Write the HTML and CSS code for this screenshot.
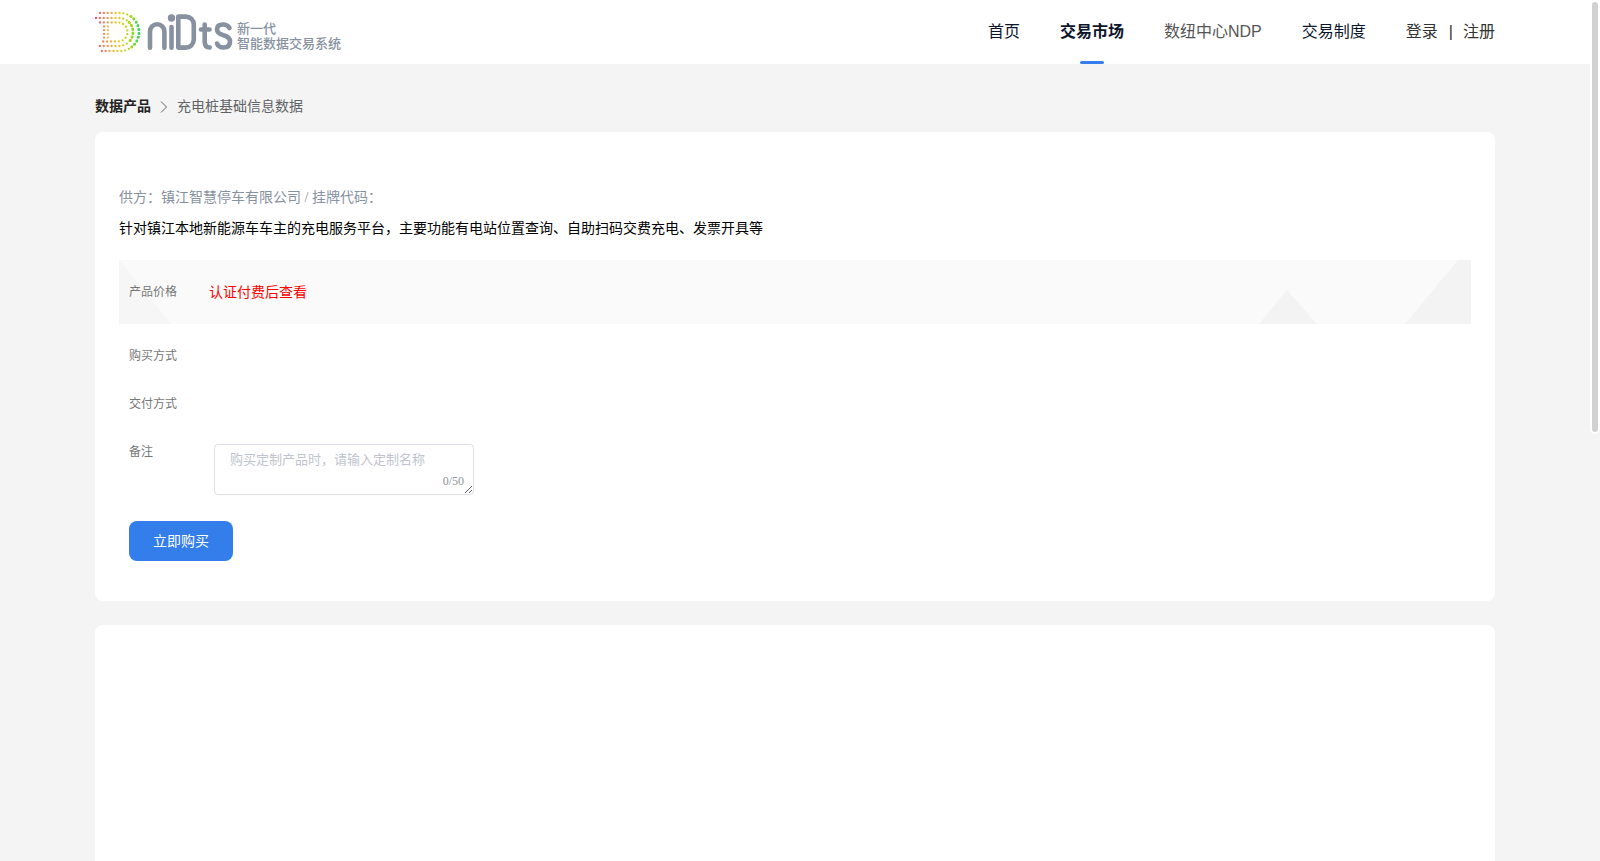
FILE: index.html
```html
<!DOCTYPE html>
<html lang="zh-CN">
<head>
  <meta charset="UTF-8" />
  <meta name="viewport" content="width=device-width, initial-scale=1.0"/>
  <title>充电桩基础信息数据</title>
  <link rel="stylesheet" href="styles.css">
</head>
<body>
  <header class="header">
    <div class="container header-inner">
      <a href="#" class="logo">
        <svg class="logo-mark" viewBox="0 0 150 42" width="150" height="42" aria-hidden="true">
          <defs>
            <linearGradient id="dots" gradientUnits="userSpaceOnUse" x1="0" y1="0" x2="46" y2="0">
              <stop offset="0" stop-color="#f8406f"/>
              <stop offset="0.25" stop-color="#fb9050"/>
              <stop offset="0.5" stop-color="#e6cf16"/>
              <stop offset="0.78" stop-color="#a8d81c"/>
              <stop offset="1" stop-color="#20d874"/>
            </linearGradient>
          </defs>
          <g fill="none" stroke="url(#dots)" stroke-width="2.3" stroke-linecap="round">
            <path stroke-dasharray="0 3.9" d="M5 2h20a19 19 0 0 1 0 38H5"/>
            <path stroke-dasharray="0 3.9" d="M1 7h23a14 14 0 0 1 0 28H1"/>
            <path stroke-dasharray="0 3.9" d="M5 11.500h18a9.500 9.500 0 0 1 0 19H5"/>
          </g>
          <g fill="none" stroke="#fb9050" stroke-width="2.3" stroke-linecap="round" stroke-dasharray="0 3.7">
            <path d="M9 15.500v12"/>
            <path d="M13 15.500v12" stroke="#f9bd55"/>
          </g>
          <!-- dots get larger towards the right side of the arc -->
          <g fill="none" stroke="url(#dots)" stroke-width="3" stroke-linecap="round" stroke-dasharray="0 3.9">
            <path d="M36 5.500a19 19 0 0 1 0 31"/>
            <path d="M34 11.200a14 14 0 0 1 0 19.600"/>
          </g>
          <g fill="none" stroke="#87919f" stroke-width="4.600" stroke-linecap="round" stroke-linejoin="round">
            <path d="M55 36.700V20.500a7.200 7.200 0 0 1 14.400 0v16.200"/>
            <path d="M76.500 36.700V16"/>
            <path d="M83.300 5.600h7.500a8 8 0 0 1 8 8v15a8 8 0 0 1-8 8h-7.500z"/>
            <path d="M109.700 13.500v17q0 6 5 6M106 18.500h8.500"/>
            <path d="M134.500 17q-2-3.500-6.500-3.500-6 0-6 5 0 4 6.500 5.700t6.500 6.300q0 6-6.500 6-5 0-6.500-4"/>
          </g>
          <circle cx="76.500" cy="7" r="3.700" fill="#87919f"/>
        </svg>
        <span class="logo-text">新一代<br>智能数据交易系统</span>
      </a>
      <nav class="nav">
        <a href="#">首页</a>
        <a href="#" class="active">交易市场</a>
        <a href="#" class="ndp">数纽中心NDP</a>
        <a href="#">交易制度</a>
        <div class="account">
          <a href="#">登录</a>
          <span>|</span>
          <a href="#">注册</a>
        </div>
      </nav>
    </div>
  </header>

  <main class="container main">
    <div class="breadcrumb">
      <a href="#">数据产品</a>
      <svg viewBox="0 0 14 14" width="14" height="14" aria-hidden="true">
        <path d="M4 1.500l5.500 5.500L4 12.500" fill="none" stroke="#606266" stroke-width="1"/>
      </svg>
      <span>充电桩基础信息数据</span>
    </div>

    <section class="card product">
      <p class="supplier">供方：镇江智慧停车有限公司 / 挂牌代码：</p>
      <p class="desc">针对镇江本地新能源车车主的充电服务平台，主要功能有电站位置查询、自助扫码交费充电、发票开具等</p>

      <div class="price">
        <svg class="price-left" viewBox="0 0 52 64" width="52" height="64" aria-hidden="true">
          <path d="M0 0L52 64H0z" fill="#f6f6f6"/>
        </svg>
        <svg class="price-right" viewBox="0 0 212 64" width="212" height="64" aria-hidden="true">
          <path d="M0 64L28 30L58 64zM146 64L199 0H212V64z" fill="#f3f3f3"/>
        </svg>
        <span class="label">产品价格</span>
        <span class="price-value">认证付费后查看</span>
      </div>

      <div class="row"><span class="label">购买方式</span></div>
      <div class="row"><span class="label">交付方式</span></div>
      <div class="row">
        <label class="label" for="remark">备注</label>
        <div class="textarea-box">
          <textarea id="remark" maxlength="50" placeholder="购买定制产品时，请输入定制名称"></textarea>
          <span class="count">0/50</span>
        </div>
      </div>
      <button class="buy" type="button">立即购买</button>
    </section>

    <section class="card detail"></section>
  </main>

  <div class="scroll-thumb"></div>
</body>
</html>
```

FILE: styles.css
```css
* {
  box-sizing: border-box;
}
body {
  margin: 0;
  padding-right: 10px;
  height: 100vh;
  display: flex;
  flex-direction: column;
  overflow: hidden;
  background-color: #f4f4f4;
  font-family: "Liberation Serif", "Noto Sans CJK SC", serif;
  font-size: 14px;
  color: #000;
}
a {
  color: inherit;
  text-decoration: none;
}
p {
  margin: 0;
}
.container {
  width: 100%;
  max-width: 1400px;
  margin: 0 auto;
}

/* header */
.header {
  background-color: #fff;
  margin-right: -10px;
  padding-right: 10px;
}
.header-inner {
  display: flex;
  justify-content: space-between;
  height: 64px;
  font-family: "Liberation Sans", "Noto Sans CJK SC", sans-serif;
}
.logo {
  display: flex;
  align-items: center;
  color: #87919f;
}
.logo-mark {
  margin-right: -8px;
}
.logo-text {
  font-size: 13px;
  line-height: 15px;
  font-weight: 500;
  padding-top: 8px;
}
.nav {
  display: flex;
  gap: 40px;
  font-size: 16px;
  line-height: 64px;
  color: #0b162b;
}
.nav .active {
  position: relative;
  font-weight: bold;
}
.nav .active::after {
  content: "";
  position: absolute;
  left: calc(50% - 12px);
  bottom: 0;
  width: 24px;
  height: 3px;
  border-radius: 2px;
  background-color: #347eeb;
}
.nav .ndp {
  color: #555;
}
.account {
  display: flex;
  gap: 10px;
  color: #333;
}
.account span {
  padding-left: 1px;
}

/* breadcrumb */
.main {
  flex: 1;
  display: flex;
  flex-direction: column;
}
.breadcrumb {
  display: flex;
  align-items: center;
  gap: 6px;
  padding: 32px 0 15px;
  line-height: 21px;
  color: #606266;
}
.breadcrumb a {
  font-weight: bold;
  color: #222;
}

/* product card */
.card {
  background-color: #fff;
  border-radius: 8px;
}
.product {
  padding: 56px 24px 40px;
}
.supplier {
  line-height: 20px;
  color: #87919f;
}
.desc {
  margin: 11px 0 21px;
  line-height: 20px;
}
.price {
  position: relative;
  display: flex;
  align-items: center;
  height: 64px;
  margin-bottom: 20px;
  padding: 0 10px 3px;
  background-color: #fafafa;
}
.price svg {
  position: absolute;
  bottom: 0;
}
.price-left {
  left: 0;
}
.price-right {
  right: 0;
}
.label {
  position: relative;
  width: 80px;
  font-size: 12px;
  color: #777;
}
.price-value {
  color: #f00;
}
.row {
  display: flex;
  margin-bottom: 24px;
  padding-left: 10px;
  line-height: 24px;
}
.textarea-box {
  position: relative;
  width: 260px;
  margin: 4px 0 0 5px;
}
.textarea-box textarea {
  display: block;
  width: 100%;
  height: 51px;
  padding: 5px 15px;
  border: 1px solid #dcdfe6;
  border-radius: 4px;
  font-family: inherit;
  font-size: 13px;
  line-height: 20px;
  resize: vertical;
}
.textarea-box textarea::placeholder {
  color: #c0c4cc;
}
.count {
  position: absolute;
  right: 10px;
  bottom: 7px;
  font-size: 12px;
  line-height: 14px;
  color: #909399;
}
.buy {
  display: block;
  margin: 26px 0 0 10px;
  padding: 0 24px 3px;
  height: 40px;
  border: none;
  border-radius: 8px;
  background-color: #347eeb;
  color: #fff;
  font-family: inherit;
  font-size: 14px;
  cursor: pointer;
}
.detail {
  flex: 1;
  margin-top: 24px;
  border-radius: 8px 8px 0 0;
}

.scroll-thumb {
  position: fixed;
  top: 0;
  right: 0;
  width: 10px;
  height: 434px;
  border: 2px solid #fff;
  border-radius: 5px;
  background-color: #d1d1d1;
}
```
